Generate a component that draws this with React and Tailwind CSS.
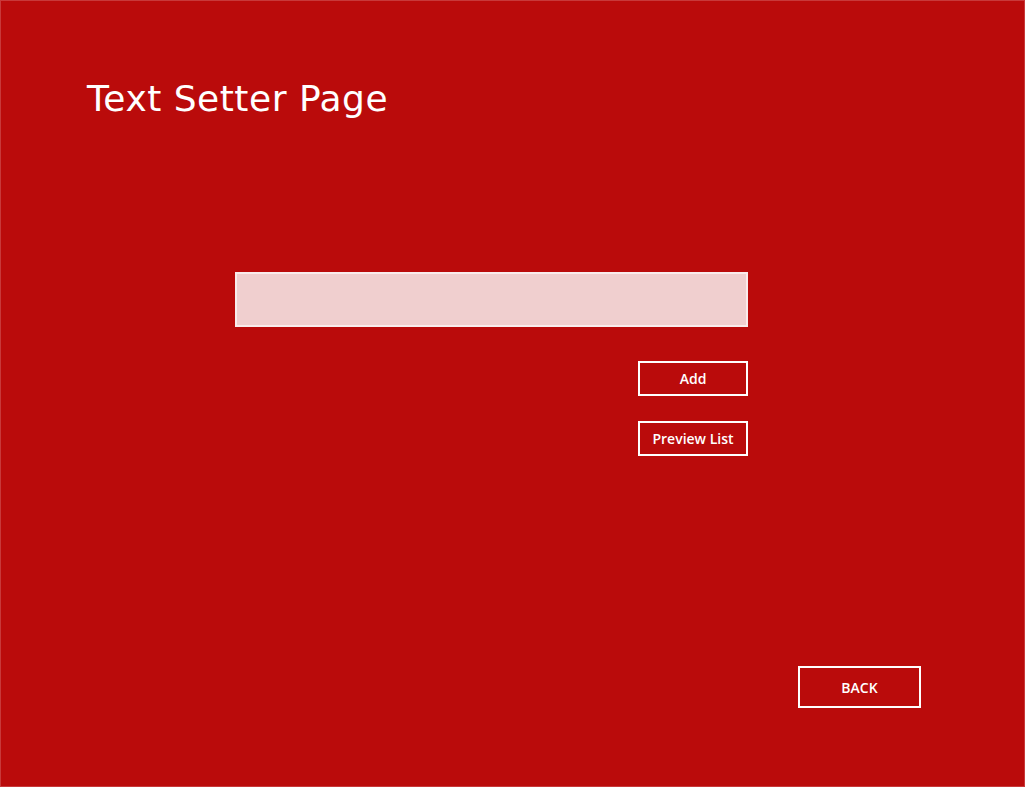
import React, { useState } from "react";

const btn =
  "border-2 border-white text-white text-[14px] font-semibold flex items-center justify-center bg-transparent";

export default function App() {
  const [text, setText] = useState("");

  return (
    <div
      className="w-[1025px] h-[787px] bg-[#ba0b0b] border border-[#c8393a] flex flex-col overflow-hidden"
      style={{ fontFamily: '"Open Sans", "Noto Sans", sans-serif' }}
    >
      <h1
        className="pl-[86px] pt-[74px] text-white text-[36px] leading-[48px] tracking-[0.5px]"
        style={{ fontFamily: '"Comic Sans MS", "DejaVu Sans", sans-serif' }}
      >
        Text Setter Page
      </h1>

      <div className="pl-[234px] pt-[149px] flex flex-col items-end w-[747px]">
        <input
          value={text}
          onChange={(e) => setText(e.target.value)}
          className="w-[513px] h-[55px] bg-[#f0cfcf] border-2 border-[#f9ecec] px-3 outline-none text-[15px] text-gray-900"
        />
        <button type="button" className={`${btn} mt-[34px] w-[110px] h-[35px]`}>
          Add
        </button>
        <button type="button" className={`${btn} mt-[25px] w-[110px] h-[35px]`}>
          Preview List
        </button>
      </div>

      <div className="flex justify-end pr-[103px] pt-[210px]">
        <button type="button" className={`${btn} w-[123px] h-[42px]`}>
          BACK
        </button>
      </div>
    </div>
  );
}
